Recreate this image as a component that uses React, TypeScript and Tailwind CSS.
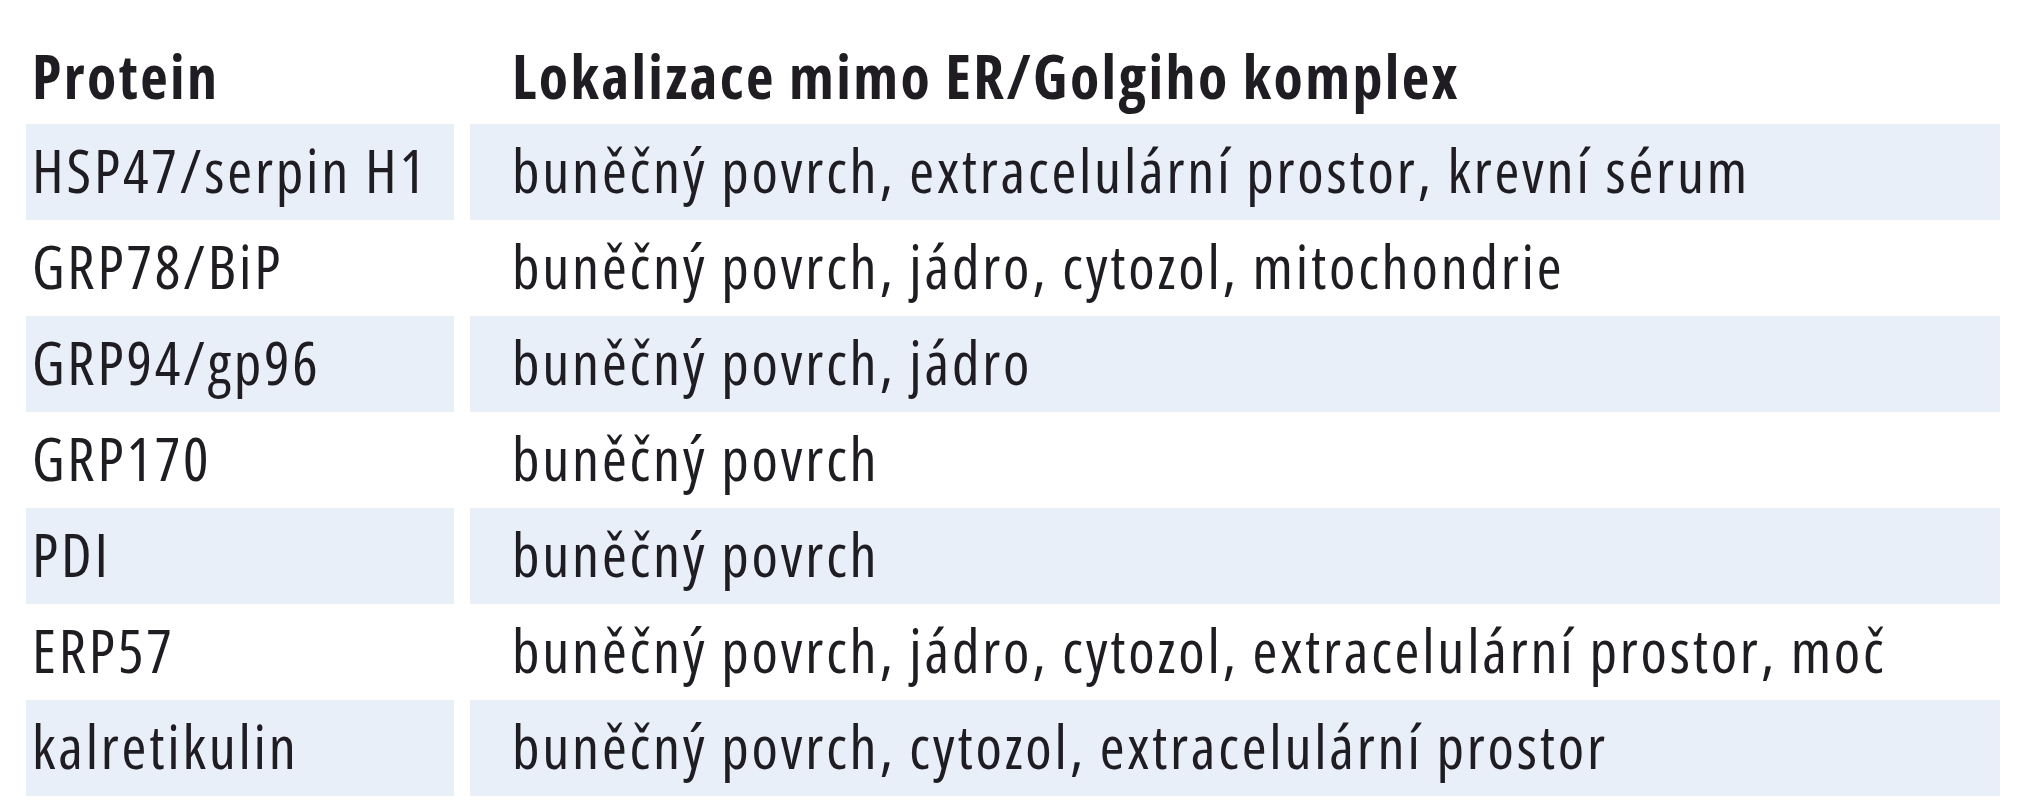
const rows = [
  ["HSP47/serpin H1", "buněčný povrch, extracelulární prostor, krevní sérum"],
  ["GRP78/BiP", "buněčný povrch, jádro, cytozol, mitochondrie"],
  ["GRP94/gp96", "buněčný povrch, jádro"],
  ["GRP170", "buněčný povrch"],
  ["PDI", "buněčný povrch"],
  ["ERP57", "buněčný povrch, jádro, cytozol, extracelulární prostor, moč"],
  ["kalretikulin", "buněčný povrch, cytozol, extracelulární prostor"],
];

export default function App() {
  return (
    <div className="min-h-screen bg-white pt-[28px] px-[26px] font-['Open_Sans',sans-serif] font-stretch-condensed text-[60px] leading-none tracking-[2.8px] text-[#1f1d22]">
      <div className="grid grid-cols-[428px_1530px] gap-x-[16px]">
        <div className="h-[96px] flex items-center pl-[6px] font-bold tracking-[2.4px]">Protein</div>
        <div className="h-[96px] flex items-center pl-[42px] font-bold tracking-[2.4px]">
          Lokalizace mimo ER/Golgiho komplex
        </div>
        {rows.map(([protein, place], i) => (
          <div key={protein} className="contents">
            <div className={`h-[96px] flex items-center pl-[6px] pb-[4px] ${i % 2 === 0 ? "bg-[#e9eff8]" : "bg-white"}`}>
              {protein}
            </div>
            <div className={`h-[96px] flex items-center pl-[42px] pb-[4px] ${i % 2 === 0 ? "bg-[#e9eff8]" : "bg-white"}`}>
              {place}
            </div>
          </div>
        ))}
      </div>
    </div>
  );
}
